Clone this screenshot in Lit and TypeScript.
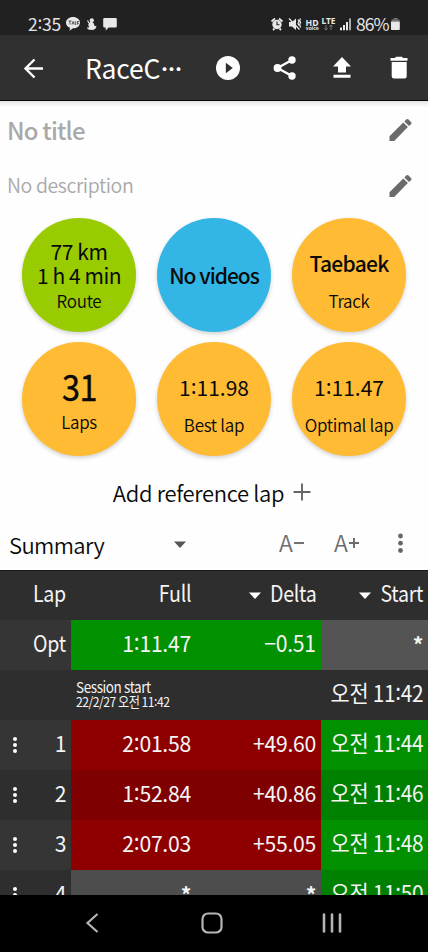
import { LitElement, html, css } from "lit";
import { customElement } from "lit/decorators.js";
import { classMap } from "lit/directives/class-map.js";

const base = css`
  :host, * { box-sizing: border-box; }
  :host { flex: none; }
  svg { display: block; flex: none; }
  .colon { vertical-align: 0.1em; line-height: 0; }
`;

/* Times are set with the colon centred on the digits. */
const time = (s: string) =>
  s.split(":").map((part, i) => (i ? html`<span class="colon">:</span>${part}` : part));

@customElement("status-bar")
class StatusBar extends LitElement {
  static styles = [base, css`
    :host { display: flex; height: 35px; background: #212121; color: #e4e4e4; padding: 13px 26px 0 28px; justify-content: space-between; }
    .side { display: flex; align-items: center; height: 22px; }
    .clock { font-size: 17.5px; letter-spacing: -0.3px; line-height: 22px; width: 38px; white-space: nowrap; }
    .pct { font-size: 17.5px; letter-spacing: -0.9px; line-height: 22px; width: 34px; white-space: nowrap; }
  `];
  render() {
    return html`
      <div class="side">
        <span class="clock">${time("2:35")}</span>
        <svg width="52" height="22" viewBox="66 13 52 22" fill="#e8e8e8">
          <path d="M73 17c4 0 7 2.500 7 5.700s-3 5.600-7 5.600l-3.500 2.500.5-3c-2.500-1-4-2.900-4-5.100 0-3.200 3-5.700 7-5.700z"/>
          <path d="M68.500 21h3m-1.500 0v3.500m2 0l1-3 1 3m1.200-3.500v3.300h1.200m1-3.300v3.500m1.800-3.500l-1.600 1.700 1.600 1.800" stroke="#333" stroke-width=".8" fill="none"/>
          <circle cx="91.800" cy="20.300" r="2.100"/>
          <path d="M89.500 22.500c2-1 4-.5 4 1.500 0 1.300 1 1.900 3 2.300-.3 2.400-2 3.700-4.800 3.700-2.500 0-4.700-.8-4.900-2.500 1 .3 2 .2 2.500-.4-1.200-1-1.300-3.400.2-4.600z"/>
          <path d="M87.500 20.500l1.500 2.500M92 25.500l2-1.800" stroke="#e8e8e8" stroke-width="1.200"/>
          <path d="M104.500 18h11q1.300 0 1.300 1.300v7q0 1.300-1.300 1.300h-6.800l-3 2.800v-2.800h-1.200q-1.300 0-1.300-1.300v-7q0-1.300 1.300-1.300z"/>
        </svg>
      </div>
      <div class="side">
        <svg width="86" height="22" viewBox="270 13 86 22" fill="#e8e8e8">
          <circle cx="277" cy="24.500" r="4.700"/>
          <path d="M271.500 21.500l3.500-3M282.500 21.500l-3.500-3M273 30l1.500-1.500M281 30l-1.500-1.500" stroke="#e8e8e8" stroke-width="1.800"/>
          <path d="M277 21.500v3.200h2.500" stroke="#212121" stroke-width="1.100" fill="none"/>
          <path d="M289 22h3l4-3.500v11.500l-4-3.500h-3z"/>
          <path d="M289 18.500l10.500 11M298 19.500l1 2-1 2 1 2M300.500 18.500l-.8 2 .8 2-.8 2 .8 3" stroke="#e8e8e8" stroke-width="1.200" fill="none"/>
          <text x="305.500" y="25.500" font-size="9.500" font-weight="700" textLength="13" lengthAdjust="spacingAndGlyphs" font-family="Noto Sans">HD</text>
          <text x="305.800" y="30" font-size="5.500" font-weight="700" textLength="13" lengthAdjust="spacingAndGlyphs" font-family="Noto Sans">voice</text>
          <text x="321.500" y="24" font-size="9" font-weight="700" textLength="14" lengthAdjust="spacingAndGlyphs" font-family="Noto Sans">LTE</text>
          <path d="M326 25v5m-1.700-1.700l1.700 1.700 1.700-1.700M331 30v-5m-1.700 1.700l1.700-1.700 1.700 1.700" stroke="#777" stroke-width="1" fill="none"/>
          <path d="M340 27.500h2v2.800h-2zM343 25h2v5.300h-2zM346 22h2v8.300h-2z"/>
          <path d="M349 18.500h2v11.800h-2z" fill="#aaa"/>
        </svg>
        <span class="pct">86%</span>
        <svg width="12" height="22" viewBox="390 13 12 22" fill="#e8e8e8">
          <path d="M393.500 18h4v1.500h-4z" fill="#777"/>
          <path d="M391.500 19.500h8v2h-8z" fill="#777"/>
          <path d="M391 21.500h8.800v7.500q0 1-1 1h-6.800q-1 0-1-1z"/>
        </svg>
      </div>`;
  }
}

@customElement("app-bar")
class AppBar extends LitElement {
  static styles = [base, css`
    :host { display: flex; align-items: center; height: 66px; background: #303030; border-bottom: 1px solid #060606; color: #fff; padding: 0 15px 0 22px; }
    .title { flex: 1; font-size: 26.500px; letter-spacing: -0.2px; line-height: 40px; padding: 1px 0 0 39px; white-space: nowrap; display: flex; align-items: center; }
    .dots { font-size: 21px; font-weight: 900; line-height: 36px; margin-left: 1px; }
    .actions { display: flex; gap: 29px; padding-top: 1px; }
    .back { padding-top: 1px; }
  `];
  render() {
    return html`
      <div class="back"><svg width="24" height="26" viewBox="22 55 24 26" fill="none" stroke="#fff" stroke-width="2.400">
        <path d="M43 68.500H25.500M34.500 59.500l-9 9 9 9"/></svg></div>
      <div class="title">RaceC<span class="dots">⋯</span></div>
      <div class="actions">
        <svg width="28" height="28" viewBox="214 54.500 28 28"><circle cx="228" cy="68.500" r="12" fill="#fff"/><path d="M225.800 63.200v10.600l7-5.300z" fill="#303030"/></svg>
        <svg width="28" height="28" viewBox="271.500 54.500 28 28" fill="#fff"><path d="M292.500 60.500l-14.500 8 14.500 8" fill="none" stroke="#fff" stroke-width="2.400"/><circle cx="292.500" cy="60.500" r="3.700"/><circle cx="278" cy="68.500" r="3.900"/><circle cx="292.500" cy="76.500" r="3.700"/></svg>
        <svg width="28" height="28" viewBox="328.500 54.500 28 28" fill="#fff"><path d="M342.500 57.500l9 9.500h-5v6h-8v-6h-5zM334 75.200h17v3h-17z"/></svg>
        <svg width="28" height="28" viewBox="385.500 54.500 28 28" fill="#fff"><path d="M391 58.500h4.500l1-1.200h6l1 1.200h4.500v2.800h-17zM392.200 62.500h15v14q0 2.500-2.500 2.500h-10q-2.500 0-2.500-2.500z"/></svg>
      </div>`;
  }
}

interface Disc { color: string; kind: string; big: string[]; small?: string; }

const discs: Disc[] = [
  { color: "green", kind: "two", big: ["77 km", "1 h 4 min"], small: "Route" },
  { color: "blue", kind: "only", big: ["No videos"] },
  { color: "amber", kind: "name", big: ["Taebaek"], small: "Track" },
  { color: "amber", kind: "count", big: ["31"], small: "Laps" },
  { color: "amber", kind: "lap", big: ["1:11.98"], small: "Best lap" },
  { color: "amber", kind: "lap", big: ["1:11.47"], small: "Optimal lap" },
];

@customElement("session-info")
class SessionInfo extends LitElement {
  static styles = [base, css`
    :host { display: block; background: #fefefe; height: 470px; color: #0a0a0a; border-bottom: 1px solid #1c1c1c; }
    .edge { height: 6px; background: linear-gradient(#e4e4e4, #fefefe); }
    .field { display: flex; justify-content: space-between; align-items: center; padding: 0 14px 0 7px; color: #a9a9a9; }
    .title { height: 50px; font-size: 24px; font-weight: 500; letter-spacing: -0.85px; padding-bottom: 4px; }
    .desc { height: 61px; font-size: 19.500px; font-weight: 350; letter-spacing: -0.4px; padding-bottom: 4px; }
    .field span { margin-top: -2px; }
    .discs { display: grid; grid-template-columns: repeat(3, 114px); gap: 10px 21px; padding: 0 22px; }
    .disc { height: 114px; border-radius: 50%; display: flex; flex-direction: column; align-items: center; white-space: nowrap; box-shadow: 0 2px 4px rgba(0,0,0,.18); }
    .green { background: #99cc00; }
    .blue { background: #33b5e5; }
    .amber { background: #ffbb33; }
    .big { font-size: 21px; line-height: 24px; letter-spacing: -0.7px; font-weight: 500; }
    .small { font-size: 17px; line-height: 24px; letter-spacing: -0.3px; font-weight: 350; }
    .two { padding-top: 21px; }
    .two .big { font-weight: 400; letter-spacing: -0.45px; }
    .two .small { padding-top: 2px; }
    .only { padding-top: 45px; }
    .only .big { letter-spacing: -1px; }
    .name { padding-top: 33px; }
    .name .small { padding-top: 14px; }
    .count { padding-top: 21px; }
    .count .big { font-size: 36px; font-weight: 400; line-height: 45px; letter-spacing: -0.5px; transform: scaleX(.9); -webkit-text-stroke: 0.4px #0a0a0a; }
    .count .small { line-height: 22px; padding-top: 3px; }
    .lap { padding-top: 33px; }
    .lap .big { font-weight: 400; letter-spacing: 0; }
    .lap .small { padding-top: 14px; }
    .add { display: flex; align-items: center; justify-content: center; gap: 9px; height: 38px; margin-top: 17px; padding: 0 4px 1px 0; font-size: 22px; font-weight: 350; letter-spacing: -0.35px; }
    .add svg { margin-top: 2px; }
    .tools { display: flex; align-items: center; height: 62px; padding: 3px 17px 0 9px; }
    .summary { width: 160px; font-size: 22px; font-weight: 350; letter-spacing: -0.6px; }
    .arrow { margin-top: 2px; }
    .icons { display: flex; flex: 1; justify-content: flex-end; align-items: center; color: #6b6b6b; }
    .sz { font-size: 23px; font-weight: 350; letter-spacing: 0; display: flex; align-items: center; line-height: 30px; padding-bottom: 3px; }
    .sz svg { margin-top: 2px; }
    .minus { width: 55px; }
    .plus { width: 61px; }
  `];
  pencil() {
    return html`<svg width="28" height="28" viewBox="0 0 28 28" fill="#6b6b6b"><path d="M3.500 25V20.200L17.300 6.500l4.600 4.600L8.200 25zM18.300 5.500l2.200-2.200q.9-.8 1.800 0l2.900 2.900q.8.900 0 1.700L23 10.100z"/></svg>`;
  }
  render() {
    return html`
      <div class="edge"></div>
      <div class="field title"><span>No title</span>${this.pencil()}</div>
      <div class="field desc"><span>No description</span>${this.pencil()}</div>
      <div class="discs">
        ${discs.map((d) => html`
          <div class=${classMap({ disc: true, [d.color]: true, [d.kind]: true })}>
            ${d.big.map((b) => html`<div class="big">${time(b)}</div>`)}
            ${d.small ? html`<div class="small">${d.small}</div>` : ""}
          </div>`)}
      </div>
      <div class="add"><span>Add reference lap</span>
        <svg width="18" height="20" viewBox="0 0 18 20" stroke="#666" stroke-width="1.900"><path d="M.5 9h17M9 .5v17"/></svg></div>
      <div class="tools">
        <span class="summary">Summary</span>
        <svg class="arrow" width="22" height="12" viewBox="0 0 22 12" fill="#555"><path d="M5 2.500h12l-6 6.500z"/></svg>
        <div class="icons">
          <span class="sz minus">A<svg width="12" height="20" viewBox="0 0 12 20" stroke="#6b6b6b" stroke-width="1.900"><path d="M1 10h10"/></svg></span>
          <span class="sz plus">A<svg width="12" height="20" viewBox="0 0 12 20" stroke="#6b6b6b" stroke-width="1.900"><path d="M1 10h10M6 5v10"/></svg></span>
          <svg width="16" height="24" viewBox="0 0 16 24" fill="#666"><circle cx="5.500" cy="4" r="2.400"/><circle cx="5.500" cy="11.200" r="2.400"/><circle cx="5.500" cy="18.500" r="2.400"/></svg>
        </div>
      </div>`;
  }
}

interface Row { lap: string; full: string; delta: string; start: string; tone: string; }

const rows: Row[] = [
  { lap: "1", full: "2:01.58", delta: "+49.60", start: "오전 11:44", tone: "light" },
  { lap: "2", full: "1:52.84", delta: "+40.86", start: "오전 11:46", tone: "dark" },
  { lap: "3", full: "2:07.03", delta: "+55.05", start: "오전 11:48", tone: "light" },
  { lap: "4", full: "*", delta: "*", start: "오전 11:50", tone: "none" },
];

@customElement("lap-table")
class LapTable extends LitElement {
  static styles = [base, css`
    :host { display: block; height: 324px; overflow: hidden; background: #2e2e2e; color: #f4f4f4; font-size: 22.500px; letter-spacing: -0.3px; line-height: 30px; }
    .row { display: grid; grid-template-columns: 71px 130px 120px 107px; height: 50px; }
    .head { height: 49px; }
    .cell { display: flex; align-items: center; justify-content: flex-end; white-space: nowrap; padding-bottom: 7px; }
    .cell span { transform-origin: right; }
    .num { transform: scaleX(.94); }
    .start .num { transform: scaleX(.925); }
    .word { transform: scaleX(.87); }
    .star { font-weight: 700; font-size: 21px; padding-top: 4px; }
    .lap { padding-right: 5px; }
    .full { padding-right: 10px; }
    .delta { padding-right: 5px; }
    .start { padding-right: 5px; }
    .menu { justify-content: space-between; padding-left: 12px; }
    .menu svg { margin-top: 7px; }
    .tri { margin-right: 2px; margin-top: 7px; }
    .start .tri { margin-right: 3px; }
    .grey { background: #545454; }
    .optlap, .light .lap { background: #353535; }
    .green, .light .start { background: #009000; }
    .light .full, .light .delta { background: #8e0000; }
    .dark .full, .dark .delta { background: #7f0000; }
    .dark .start, .none .start { background: #008000; }
    .none .full, .none .delta { background: #4d4d4d; }
    .session { grid-column: 2 / 4; display: flex; flex-direction: column; align-items: flex-start; padding: 10px 0 0 5px; font-size: 15px; line-height: 14px; letter-spacing: -0.45px; }
    .session > span { transform: scaleX(.9); transform-origin: left; }
    .date { font-size: 13.500px; letter-spacing: -0.55px; }
  `];
  tri() {
    return html`<svg class="tri" width="12" height="8" viewBox="0 0 12 8" fill="#fff"><path d="M0 .5h12L6 7z"/></svg>`;
  }
  value(s: string) {
    return s === "*" ? html`<span class="star">*</span>` : html`<span class="num">${time(s)}</span>`;
  }
  render() {
    return html`
      <div class="row head">
        <div class="cell lap"><span class="word">Lap</span></div>
        <div class="cell full"><span class="word">Full</span></div>
        <div class="cell delta">${this.tri()}<span class="word">Delta</span></div>
        <div class="cell start">${this.tri()}<span class="word">Start</span></div>
      </div>
      <div class="row">
        <div class="cell lap optlap"><span class="word">Opt</span></div>
        <div class="cell full green">${this.value("1:11.47")}</div>
        <div class="cell delta green">${this.value("−0.51")}</div>
        <div class="cell start grey">${this.value("*")}</div>
      </div>
      <div class="row">
        <div></div>
        <div class="session"><span>Session start</span><span class="date">${time("22/2/27 오전 11:42")}</span></div>
        <div class="cell start">${this.value("오전 11:42")}</div>
      </div>
      ${rows.map((r) => html`
        <div class=${classMap({ row: true, [r.tone]: true })}>
          <div class="cell lap menu">
            <svg width="6" height="18" viewBox="0 0 6 18" fill="#fff"><circle cx="3" cy="3" r="2"/><circle cx="3" cy="9" r="2"/><circle cx="3" cy="15" r="2"/></svg>
            ${this.value(r.lap)}
          </div>
          <div class="cell full">${this.value(r.full)}</div>
          <div class="cell delta">${this.value(r.delta)}</div>
          <div class="cell start">${this.value(r.start)}</div>
        </div>`)}`;
  }
}

@customElement("nav-bar")
class NavBar extends LitElement {
  static styles = [base, css`
    :host { display: flex; height: 57px; background: #000; align-items: center; justify-content: space-between; padding: 0 83px 1px 83px; }
  `];
  render() {
    return html`
      <svg width="18" height="24" viewBox="83 911 18 24" fill="none" stroke="#b4b4b4" stroke-width="2.200"><path d="M97.500 914l-10 9 10 9"/></svg>
      <svg width="24" height="24" viewBox="199 911 24 24" fill="none" stroke="#b4b4b4" stroke-width="2.200"><rect x="202.500" y="913.500" width="19" height="19" rx="5.500"/></svg>
      <svg width="24" height="24" viewBox="321 911 24 24" fill="none" stroke="#b4b4b4" stroke-width="2.600" stroke-linecap="round"><path d="M324 914.500v17M332 914.500v17M340 914.500v17"/></svg>`;
  }
}

@customElement("app-root")
class AppRoot extends LitElement {
  static styles = css`
    :host { display: flex; flex-direction: column; width: 428px; height: 952px; overflow: hidden; background: #000; font-family: "Noto Sans CJK KR", "Noto Sans", sans-serif; }
  `;
  render() {
    return html`<status-bar></status-bar><app-bar></app-bar><session-info></session-info><lap-table></lap-table><nav-bar></nav-bar>`;
  }
}
